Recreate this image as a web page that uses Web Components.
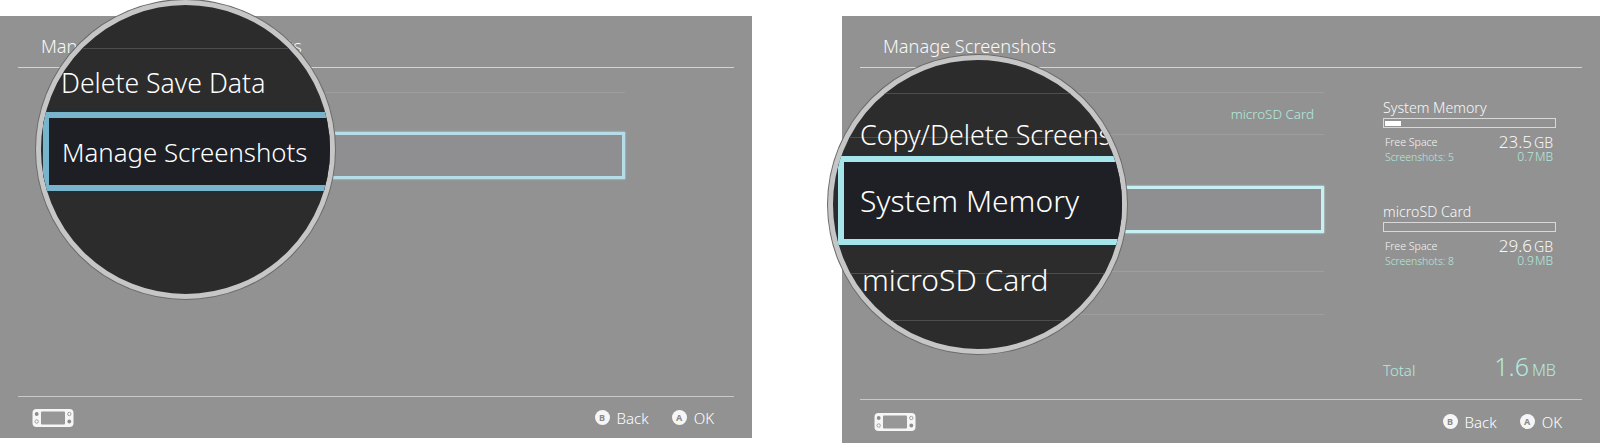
<!DOCTYPE html>
<html>
<head>
<meta charset="utf-8">
<style>
  html, body { margin: 0; background: #fff; }
  body { font-family: "Noto Sans", "Liberation Sans", sans-serif; font-weight: 300; color: #f2f2f2; }
</style>
</head>
<body>
<shot-page>
  <switch-screen heading="Manage Save Data/Screenshots" style="--w:752px;--h:422px;--foot:41px">
    <menu-list style="--indent:45px;--width:562px;--tone:#b5dde8">
      <list-row style="--row:39px" class="plain"></list-row>
      <list-row style="--row:47px" selected></list-row>
    </menu-list>
    <magnifier-lens slot="lens" style="--x:36px;--y:-16px;--tone:#78b4cc;--sel:#1d1f25;--lines:linear-gradient(#4d4d4d,#4d4d4d) 0 43px/100% 1px no-repeat">
      <lens-row style="--row:43px"></lens-row>
      <lens-row style="--row:64px;--fs:26.6px;--pad:20px;--push:5px">Delete Save Data</lens-row>
      <lens-row style="--row:79px;--fs:25.8px;--mark:2px;--pad:13px" selected>Manage Screenshots</lens-row>
    </magnifier-lens>
  </switch-screen>
  <switch-screen heading="Manage Screenshots" style="--w:758px;--h:427px;--foot:43px">
    <div class="columns" style="display:flex">
      <menu-list style="--indent:30px;--width:434px;--tone:#c6f0f4">
        <list-row style="--row:42px"><teal-text>microSD Card</teal-text></list-row>
        <list-row style="--row:51px" class="plain"></list-row>
        <list-row style="--row:47px" selected></list-row>
        <list-row style="--row:39px"></list-row>
        <list-row style="--row:43px"></list-row>
      </menu-list>
      <storage-panel></storage-panel>
    </div>
    <magnifier-lens slot="lens" style="--x:-14px;--y:39px;--tone:#a6e6ea;--sel:#1e2026;--lines:linear-gradient(#4d4d4d,#4d4d4d) 0 33px/100% 1px no-repeat,linear-gradient(#4d4d4d,#4d4d4d) 0 77px/100% 1px no-repeat,linear-gradient(#4d4d4d,#4d4d4d) 0 213px/100% 1px no-repeat,linear-gradient(#4d4d4d,#4d4d4d) 0 260px/100% 1px no-repeat">
      <lens-row style="--row:96px;--fs:26.8px;--pad:27px;--push:52px">Copy/Delete Screenshots</lens-row>
      <lens-row style="--row:89px;--fs:30px;--mark:5px;--pad:16px" selected>System Memory</lens-row>
      <lens-row style="--row:69px;--fs:30px;--pad:29px">microSD Card</lens-row>
    </magnifier-lens>
  </switch-screen>
</shot-page>

<script>
class ShotPage extends HTMLElement {
  constructor() {
    super();
    this.attachShadow({ mode: 'open' });
    this.shadowRoot.innerHTML = `
      <style>
        :host { display: flex; gap: 90px; padding-top: 16px; width: 1600px; }
      </style>
      <slot></slot>
    `;
  }
}

class SwitchScreen extends HTMLElement {
  constructor() {
    super();
    this.attachShadow({ mode: 'open' });
    const heading = this.getAttribute('heading');
    this.shadowRoot.innerHTML = `
      <style>
        :host {
          display: flex;
          flex-direction: column;
          position: relative;
          flex: none;
          width: var(--w);
          height: var(--h);
          box-sizing: border-box;
          padding: 0 18px;
          background: #929292;
        }
        header {
          height: 52px;
          box-sizing: border-box;
          padding: 19px 0 0 23px;
          border-bottom: 1px solid #d4d4d4;
          font-size: 18.2px;
          line-height: 23px;
          color: #f8f8f8;
        }
        main { flex: 1; min-height: 0; }
        footer {
          height: var(--foot);
          border-top: 1px solid #c8c8c8;
          display: flex;
          align-items: center;
          gap: 23px;
          padding-right: 20px;
          font-size: 15px;
          color: #fff;
        }
        .console { margin: 0 auto 0 14px; }
        .btn { display: flex; align-items: center; gap: 7px; }
        .dot {
          width: 15px; height: 15px; border-radius: 50%;
          background: #f6f6f6; color: #8a8a8a;
          font: bold 9px/15px "Noto Sans", sans-serif; text-align: center;
        }
      </style>
      <header>${heading}</header>
      <main><slot></slot></main>
      <footer>
        <svg class="console" width="42" height="20" viewBox="0 0 42 20">
          <rect x="0.5" y="1" width="41" height="18" rx="4" fill="#f6f6f6"/>
          <rect x="9" y="3.5" width="24" height="13" rx="1" fill="#979797"/>
          <circle cx="4.7" cy="6" r="1.9" fill="#8c8c8c"/>
          <circle cx="4.7" cy="13.5" r="1.7" fill="none" stroke="#999" stroke-width="0.9"/>
          <circle cx="37.3" cy="6" r="1.7" fill="none" stroke="#999" stroke-width="0.9"/>
          <circle cx="37.3" cy="13.5" r="1.9" fill="#8c8c8c"/>
        </svg>
        <span class="btn"><span class="dot">B</span>Back</span>
        <span class="btn"><span class="dot">A</span>OK</span>
      </footer>
      <slot name="lens"></slot>
    `;
  }
}

class MenuList extends HTMLElement {
  constructor() {
    super();
    this.attachShadow({ mode: 'open' });
    this.shadowRoot.innerHTML = `
      <style>
        :host {
          display: block;
          flex: none;
          box-sizing: border-box;
          width: var(--width);
          margin: 24px 0 0 var(--indent);
          border-top: 1px solid #9e9e9e;
        }
      </style>
      <slot></slot>
    `;
  }
}

class ListRow extends HTMLElement {
  constructor() {
    super();
    this.attachShadow({ mode: 'open' });
    this.shadowRoot.innerHTML = `
      <style>
        :host {
          display: flex;
          align-items: center;
          justify-content: flex-end;
          box-sizing: border-box;
          height: var(--row);
          padding-right: 10px;
          border-bottom: 1px solid #9e9e9e;
        }
        :host(.plain) { border-bottom: 0; }
        :host([selected]) {
          border: 3px solid var(--tone);
          background: #8f8f91;
          box-shadow: 0 0 2px var(--tone);
        }
      </style>
      <slot></slot>
    `;
  }
}

class TealText extends HTMLElement {
  constructor() {
    super();
    this.attachShadow({ mode: 'open' });
    this.shadowRoot.innerHTML = `
      <style>
        :host { color: #b2eadf; font-size: 13.4px; }
      </style>
      <slot></slot>
    `;
  }
}

class LensRow extends HTMLElement {
  constructor() {
    super();
    this.attachShadow({ mode: 'open' });
    this.shadowRoot.innerHTML = `
      <style>
        :host {
          display: flex;
          align-items: center;
          box-sizing: border-box;
          flex: none;
          height: var(--row);
          padding: var(--push, 0px) 0 0 var(--pad, 0px);
          font-size: var(--fs, 25px);
          white-space: nowrap;
          color: #fff;
        }
        :host([selected]) {
          margin-left: var(--mark);
          padding-top: 0;
          background: var(--sel);
          border: 6px solid var(--tone);
          border-right: 0;
          box-shadow: 0 0 3px #0d3a4a;
        }
      </style>
      <slot></slot>
    `;
  }
}

class MagnifierLens extends HTMLElement {
  constructor() {
    super();
    this.attachShadow({ mode: 'open' });
    this.shadowRoot.innerHTML = `
      <style>
        :host {
          display: block;
          position: absolute;
          left: var(--x);
          top: var(--y);
          box-sizing: border-box;
          width: 299px;
          height: 299px;
          border-radius: 50%;
          overflow: hidden;
          background: #2c2c2d;
          border: 5px solid #c6c6c6;
          box-shadow: 0 0 0 1px #6a6a6a;
        }
        .content {
          display: flex;
          flex-direction: column;
          height: 100%;
          background: var(--lines);
        }
      </style>
      <div class="content"><slot></slot></div>
    `;
  }
}

class StoragePanel extends HTMLElement {
  constructor() {
    super();
    this.attachShadow({ mode: 'open' });
    const block = (name, used, free, shots, size) => `
      <section>
        <h3>${name}</h3>
        <div class="bar"><i style="width:${used}px"></i></div>
        <div class="line"><span>Free Space</span><b>${free}<small>GB</small></b></div>
        <div class="line teal"><span>Screenshots: ${shots}</span><em>${size}</em></div>
      </section>`;
    this.shadowRoot.innerHTML = `
      <style>
        :host {
          display: flex;
          flex-direction: column;
          flex: none;
          width: 173px;
          height: 330px;
          margin-left: 59px;
          padding: 30px 0 15px;
          box-sizing: border-box;
          gap: 38px;
        }
        h3 { margin: 0; font-weight: 300; font-size: 14.2px; line-height: 19px; color: #f8f8f8; }
        .bar { box-sizing: border-box; height: 10px; margin: 1px 0 6px; border: 1px solid #d8d8d8; padding: 1.5px 1px; }
        .bar i { display: block; height: 100%; background: #fff; }
        .line { display: flex; justify-content: space-between; align-items: center; padding: 0 3px 0 2px; font-size: 10.6px; height: 15px; color: #f8f8f8; }
        .line b { font-weight: 300; font-size: 17px; }
        .line small { font-size: 14px; margin-left: 2px; }
        .line em { font-style: normal; font-size: 12px; word-spacing: -2px; }
        .teal { color: #b2eadf; font-size: 10.4px; }
        .total { display: flex; justify-content: space-between; align-items: baseline; margin-top: auto; color: #b2eadf; font-size: 15px; }
        .total b { font-weight: 300; font-size: 25px; }
        .total small { font-size: 16px; margin-left: 3px; }
      </style>
      ${block('System Memory', 16, '23.5', 5, '0.7 MB')}
      ${block('microSD Card', 0, '29.6', 8, '0.9 MB')}
      <div class="total"><span>Total</span><b>1.6<small>MB</small></b></div>
    `;
  }
}

customElements.define('shot-page', ShotPage);
customElements.define('switch-screen', SwitchScreen);
customElements.define('menu-list', MenuList);
customElements.define('list-row', ListRow);
customElements.define('teal-text', TealText);
customElements.define('lens-row', LensRow);
customElements.define('magnifier-lens', MagnifierLens);
customElements.define('storage-panel', StoragePanel);
</script>
</body>
</html>
